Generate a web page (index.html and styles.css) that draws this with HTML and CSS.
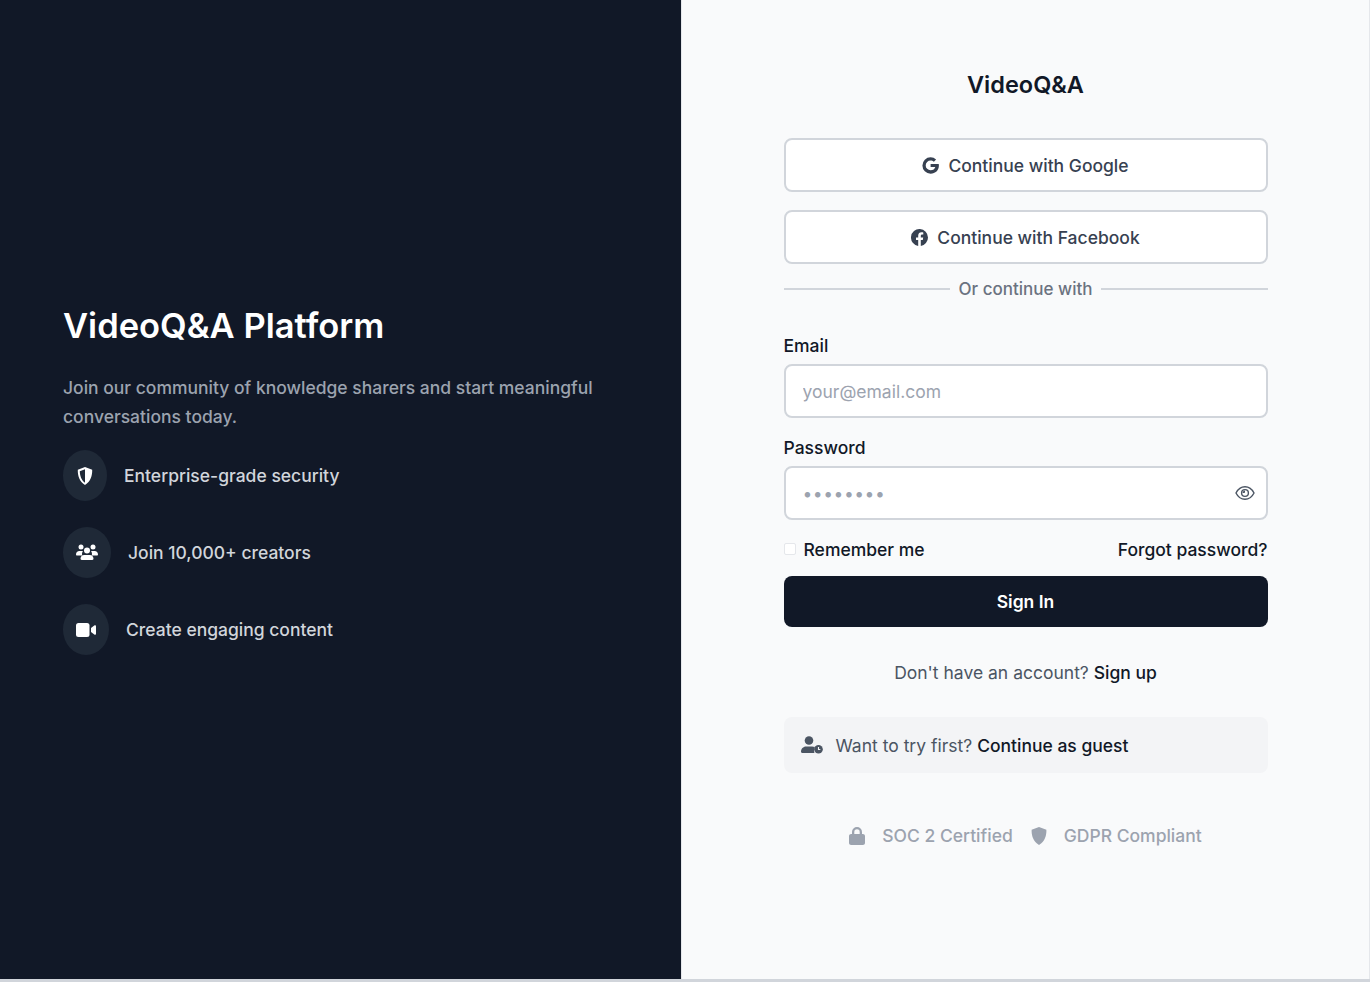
FILE: index.html
```html
<!DOCTYPE html>
<html lang="en">
<head>
  <meta charset="UTF-8" />
  <meta name="viewport" content="width=device-width, initial-scale=1.0" />
  <title>VideoQ&amp;A - Sign In</title>
  <link rel="stylesheet" href="styles.css">
</head>

<body>
  <div class="page">
    <section class="intro">
      <h1>VideoQ&amp;A Platform</h1>
      <p class="intro-text">Join our community of knowledge sharers and start meaningful conversations today.</p>
      <ul class="features">
        <li class="feature">
          <span class="feature-icon">
            <svg width="16" height="18" viewBox="0 0 16 18"><path fill="#fff" fill-rule="evenodd" d="M8 0l7.2 2.8c.2 5.8-1.6 12-7.2 15.2C2.4 14.800.6 8.600.8 2.800zM8 2.300L2.800 4.300C2.900 8.600 4.300 13.300 8 15.700z"/></svg>
          </span>
          <span>Enterprise-grade security</span>
        </li>
        <li class="feature">
          <span class="feature-icon icon-wide">
            <svg width="22" height="18" viewBox="0 0 22 18" fill="#fff"><circle cx="5" cy="3" r="2.500"/><circle cx="17" cy="3" r="2.500"/><circle cx="11" cy="6.500" r="3"/><path d="M0 10.500C0 8.500 1.500 7 3.300 7h2.500c.4 0 .8.100 1.100.2-.6.800-.9 1.700-.9 2.800 0 .5.100 1 .3 1.500H1C.4 11.500 0 11 0 10.500zM22 10.500C22 8.500 20.500 7 18.700 7h-2.500c-.4 0-.8.100-1.100.2.600.8.900 1.700.9 2.800 0 .5-.1 1-.3 1.500H21c.6 0 1-.5 1-1zM8.200 11h5.600c2 0 3.700 1.700 3.700 3.800 0 .7-.5 1.200-1.200 1.200H5.700c-.7 0-1.200-.5-1.200-1.200C4.500 12.700 6.200 11 8.200 11z"/></svg>
          </span>
          <span>Join 10,000+ creators</span>
        </li>
        <li class="feature">
          <span class="feature-icon icon-mid">
            <svg width="20" height="14" viewBox="0 0 20 14" fill="#fff"><rect x="0" y="0" width="13.500" height="14" rx="2.500"/><path d="M15 5l3.300-2.500c.7-.5 1.700 0 1.700.8v7.400c0 .8-1 1.300-1.700.8L15 9z"/></svg>
          </span>
          <span>Create engaging content</span>
        </li>
      </ul>
    </section>

    <section class="auth">
      <form class="auth-form">
        <h2>VideoQ&amp;A</h2>

        <button class="social-btn" type="button">
          <svg width="17" height="17" viewBox="0 0 17 17"><path fill="#374151" d="M16.700 7H8.600v3h4.700c-.5 2-2.300 3.300-4.700 3.300a4.900 4.900 0 0 1 0-9.800c1.200 0 2.400.4 3.300 1.300l2.200-2.200A8.200 8.200 0 0 0 8.600.3a8.200 8.200 0 1 0 0 16.400c4.800 0 8.300-3.400 8.300-8.200 0-.5-.1-1-.2-1.500z"/></svg>
          Continue with Google
        </button>
        <button class="social-btn" type="button">
          <svg width="17" height="17" viewBox="0 0 17 17"><path fill="#374151" d="M17 8.500a8.500 8.500 0 1 0-9.800 8.400v-5.900H5V8.500h2.200V6.600c0-2.100 1.300-3.300 3.200-3.300.9 0 1.900.2 1.900.2v2.100h-1.100c-1 0-1.400.7-1.400 1.300v1.600h2.400l-.4 2.500h-2v5.900A8.500 8.500 0 0 0 17 8.500z"/></svg>
          Continue with Facebook
        </button>

        <div class="divider"><span>Or continue with</span></div>

        <label class="field-label" for="email">Email</label>
        <input class="text-input" id="email" type="email" placeholder="your@email.com">

        <label class="field-label field-label-password" for="password">Password</label>
        <div class="password-wrap">
          <input class="text-input" id="password" type="text" placeholder="••••••••">
          <svg class="eye" width="20" height="16" viewBox="0 0 20 16" fill="none" stroke="#4b5563" stroke-width="1.400"><path d="M1 8c2-4 5.200-6.300 9-6.300S17 4 19 8c-2 4-5.200 6.300-9 6.300S3 12 1 8z"/><circle cx="10" cy="8" r="3.400"/><path d="M8.500 8A1.500 1.500 0 0 1 10 6.500" stroke-width="1.800"/></svg>
        </div>

        <div class="options">
          <label class="remember"><input class="check" type="checkbox"> Remember me</label>
          <a class="dark-link" href="#">Forgot password?</a>
        </div>

        <button class="submit-btn" type="submit">Sign In</button>

        <p class="signup">Don't have an account? <a class="dark-link" href="#">Sign up</a></p>

        <div class="guest">
          <svg width="22" height="18" viewBox="0 0 22 18" fill="#4b5563"><circle cx="8" cy="4.500" r="4.300"/><path d="M5 10.500h6c1.200 0 2.200.3 3 .9a5.500 5.500 0 0 0-.6 5.600H1.200C.5 17 0 16.500 0 15.800c0-3 2.200-5.300 5-5.300z"/><circle cx="17.500" cy="13.200" r="4.300"/><path d="M17.500 11v2.500h1.800" fill="none" stroke="#f3f4f6" stroke-width="1.100"/></svg>
          <span>Want to try first? <a class="dark-link" href="#">Continue as guest</a></span>
        </div>

        <div class="badges">
          <svg width="16" height="18" viewBox="0 0 16 18" fill="#9ca3af"><path d="M3 7V5a5 5 0 0 1 10 0v2h.9c1.100 0 2.100.9 2.100 2v7c0 1.100-1 2-2.100 2H2.100C1 18 0 17.100 0 16V9c0-1.100 1-2 2.100-2zm2.300 0h5.400V5a2.700 2.700 0 0 0-5.400 0z"/></svg>
          <span class="badge-text">SOC 2 Certified</span>
          <svg class="badge-shield" width="16" height="18" viewBox="0 0 16 18" fill="#9ca3af"><path d="M8 0l7.400 2.800c.2 5.800-1.600 12-7.400 15.200C2.200 14.800.4 8.600.6 2.800z"/></svg>
          <span class="badge-text">GDPR Compliant</span>
        </div>
      </form>
    </section>
  </div>
</body>
</html>
```

FILE: styles.css
```css
* {
  box-sizing: border-box;
}

body {
  margin: 0;
  height: 982px;
  overflow: hidden;
  background-color: #d1d5db;
  font-family: 'Inter', sans-serif;
}

.page {
  display: flex;
  height: 979px;
}

/* left panel */
.intro {
  width: 681px;
  background-color: #111827;
  display: flex;
  flex-direction: column;
  justify-content: center;
  padding: 0 63px 18px;
}

.intro h1 {
  margin: 0;
  font-size: 34.500px;
  font-weight: 600;
  line-height: 40px;
  color: #fff;
}

.intro-text {
  margin: 27px 0 0;
  max-width: 540px;
  font-size: 17.500px;
  font-weight: 500;
  line-height: 29px;
  color: #9ca3af;
}

.features {
  list-style: none;
  margin: 19px 0 0;
  padding: 0;
}

.feature {
  display: flex;
  align-items: center;
  gap: 17px;
  height: 51px;
  margin-bottom: 26px;
  font-size: 17.500px;
  font-weight: 500;
  color: #d1d5db;
}

.feature:last-child {
  margin-bottom: 0;
}

.feature-icon {
  width: 44px;
  height: 51px;
  border-radius: 50%;
  background-color: #1f2937;
  display: flex;
  align-items: center;
  justify-content: center;
}

.icon-wide {
  width: 48px;
}

.icon-mid {
  width: 46px;
}

/* right panel */
.auth {
  flex: 1;
  background-color: #f9fafb;
  border-left: 1px solid #e5e7eb;
  border-right: 1px solid #e5e7eb;
  display: flex;
  justify-content: center;
}

.auth-form {
  width: 484px;
  padding-top: 69px;
}

.auth-form h2 {
  margin: 0 0 37px;
  font-size: 23.500px;
  font-weight: 600;
  line-height: 32px;
  text-align: center;
  color: #111827;
}

.social-btn {
  display: flex;
  align-items: center;
  justify-content: center;
  gap: 9px;
  width: 100%;
  height: 54px;
  margin-bottom: 18px;
  background: #fff;
  border: 2px solid #d1d5db;
  border-radius: 8px;
  font-family: inherit;
  font-size: 17.500px;
  font-weight: 500;
  color: #374151;
}

.divider {
  display: flex;
  align-items: center;
  gap: 9px;
  height: 20px;
  margin-top: -3px;
  font-size: 17px;
  font-weight: 500;
  color: #6b7280;
}

.divider::before,
.divider::after {
  content: "";
  flex: 1;
  height: 2px;
  background-color: #d1d5db;
}

.field-label {
  display: block;
  margin: 36px 0 7px;
  font-size: 17.500px;
  font-weight: 500;
  line-height: 22px;
  color: #111827;
}

.field-label-password {
  margin-top: 19px;
}

.text-input {
  display: block;
  width: 100%;
  height: 54px;
  padding: 0 17px;
  background: #fff;
  border: 2px solid #d1d5db;
  border-radius: 8px;
  font-family: inherit;
  font-size: 17.500px;
  color: #111827;
}

.text-input::placeholder {
  color: #9ca3af;
  opacity: 1;
}

#password::placeholder {
  letter-spacing: 0.5px;
}

.password-wrap {
  position: relative;
}

.eye {
  position: absolute;
  top: 19px;
  right: 13px;
}

.options {
  display: flex;
  justify-content: space-between;
  align-items: center;
  height: 22px;
  margin-top: 18px;
  font-size: 17.500px;
  font-weight: 500;
}

.remember {
  display: flex;
  align-items: center;
  color: #111827;
}

.check {
  appearance: none;
  width: 12px;
  height: 12px;
  margin: 0 8px 0 0;
  background: #fff;
  border: 1px solid #e5e7eb;
  border-radius: 2px;
}

.dark-link {
  color: #111827;
  text-decoration: none;
  font-weight: 500;
}

.submit-btn {
  display: block;
  width: 100%;
  height: 51px;
  margin-top: 16px;
  background-color: #111827;
  border: none;
  border-radius: 8px;
  font-family: inherit;
  font-size: 17.500px;
  font-weight: 600;
  color: #fff;
}

.signup {
  margin: 35px 0 0;
  font-size: 17.500px;
  line-height: 22px;
  text-align: center;
  color: #4b5563;
}

.guest {
  display: flex;
  align-items: center;
  gap: 13px;
  height: 56px;
  margin-top: 33px;
  padding: 0 17px;
  background-color: #f3f4f6;
  border-radius: 8px;
  font-size: 17.500px;
  color: #4b5563;
}

.badges {
  display: flex;
  align-items: center;
  justify-content: center;
  margin-top: 52px;
  font-size: 17.500px;
  font-weight: 500;
  color: #9ca3af;
}

.badge-text {
  margin-left: 17px;
}

.badge-shield {
  margin-left: 18px;
}
```
